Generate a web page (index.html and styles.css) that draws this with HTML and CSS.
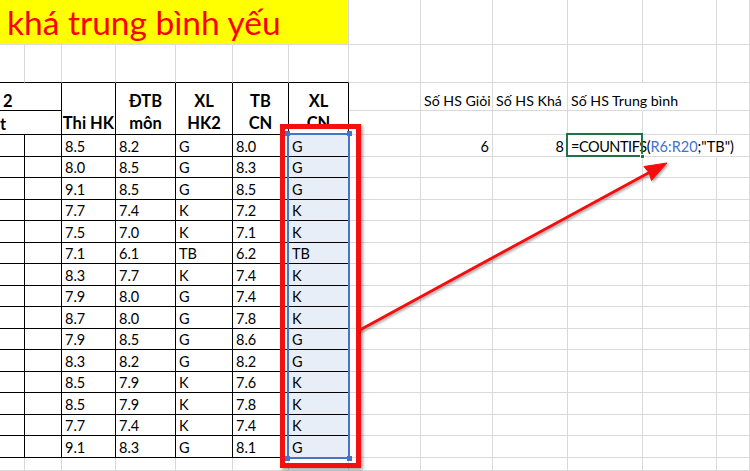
FILE: index.html
```html
<!DOCTYPE html>
<html lang="vi">
<head>
<meta charset="utf-8">
<title>COUNTIFS</title>
<link rel="stylesheet" href="styles.css">
</head>
<body>
<div class="sheet">
  <!-- row 1 -->
  <div class="c title span7">khá trung bình yếu</div>
  <div class="c"></div><div class="c"></div><div class="c"></div><div class="c"></div><div class="c"></div><div class="c"></div>
  <!-- row 2 -->
  <div class="c top"></div><div class="c top"></div><div class="c top"></div><div class="c top"></div><div class="c top"></div><div class="c top"></div><div class="c top"></div>
  <div class="c"></div><div class="c"></div><div class="c"></div><div class="c"></div><div class="c"></div><div class="c"></div>
  <!-- row 3 -->
  <div class="c tb span2 hd2 two">2</div>
  <div class="c tb hdr rs2">Thi HK</div>
  <div class="c tb hdr rs2">ĐTB<br>môn</div>
  <div class="c tb hdr rs2">XL<br>HK2</div>
  <div class="c tb hdr rs2">TB<br>CN</div>
  <div class="c tb hdr rs2">XL<br>CN</div>
  <div class="c"></div>
  <div class="c lbl">Số HS Giỏi</div>
  <div class="c lbl">Số HS Khá</div>
  <div class="c nr lbl">Số HS Trung bình</div>
  <div class="c"></div><div class="c"></div>
  <!-- row 4 -->
  <div class="c tb span2 hd2 tee">t</div>
  <div class="c"></div><div class="c"></div><div class="c"></div><div class="c"></div><div class="c"></div><div class="c"></div>
  <!-- data rows -->
  <div class="c tb"></div><div class="c tb"></div><div class="c tb">8.5</div><div class="c tb">8.2</div><div class="c tb">G</div><div class="c tb">8.0</div><div class="c tb sel">G</div>
  <div class="c"></div><div class="c num">6</div><div class="c num">8</div>
  <div class="c nr formula"><span class="fn">=COUNTIFS</span>(<span class="ref">R6:R20</span>;"TB")</div>
  <div class="c nr"></div><div class="c"></div>

  <div class="c tb"></div><div class="c tb"></div><div class="c tb">8.0</div><div class="c tb">8.5</div><div class="c tb">G</div><div class="c tb">8.3</div><div class="c tb sel">G</div>
  <div class="c"></div><div class="c"></div><div class="c"></div><div class="c"></div><div class="c"></div><div class="c"></div>

  <div class="c tb"></div><div class="c tb"></div><div class="c tb">9.1</div><div class="c tb">8.5</div><div class="c tb">G</div><div class="c tb">8.5</div><div class="c tb sel">G</div>
  <div class="c"></div><div class="c"></div><div class="c"></div><div class="c"></div><div class="c"></div><div class="c"></div>

  <div class="c tb"></div><div class="c tb"></div><div class="c tb">7.7</div><div class="c tb">7.4</div><div class="c tb">K</div><div class="c tb">7.2</div><div class="c tb sel">K</div>
  <div class="c"></div><div class="c"></div><div class="c"></div><div class="c"></div><div class="c"></div><div class="c"></div>

  <div class="c tb"></div><div class="c tb"></div><div class="c tb">7.5</div><div class="c tb">7.0</div><div class="c tb">K</div><div class="c tb">7.1</div><div class="c tb sel">K</div>
  <div class="c"></div><div class="c"></div><div class="c"></div><div class="c"></div><div class="c"></div><div class="c"></div>

  <div class="c tb"></div><div class="c tb"></div><div class="c tb">7.1</div><div class="c tb">6.1</div><div class="c tb">TB</div><div class="c tb">6.2</div><div class="c tb sel">TB</div>
  <div class="c"></div><div class="c"></div><div class="c"></div><div class="c"></div><div class="c"></div><div class="c"></div>

  <div class="c tb"></div><div class="c tb"></div><div class="c tb">8.3</div><div class="c tb">7.7</div><div class="c tb">K</div><div class="c tb">7.4</div><div class="c tb sel">K</div>
  <div class="c"></div><div class="c"></div><div class="c"></div><div class="c"></div><div class="c"></div><div class="c"></div>

  <div class="c tb"></div><div class="c tb"></div><div class="c tb">7.9</div><div class="c tb">8.0</div><div class="c tb">G</div><div class="c tb">7.4</div><div class="c tb sel">K</div>
  <div class="c"></div><div class="c"></div><div class="c"></div><div class="c"></div><div class="c"></div><div class="c"></div>

  <div class="c tb"></div><div class="c tb"></div><div class="c tb">8.7</div><div class="c tb">8.0</div><div class="c tb">G</div><div class="c tb">7.8</div><div class="c tb sel">K</div>
  <div class="c"></div><div class="c"></div><div class="c"></div><div class="c"></div><div class="c"></div><div class="c"></div>

  <div class="c tb"></div><div class="c tb"></div><div class="c tb">7.9</div><div class="c tb">8.5</div><div class="c tb">G</div><div class="c tb">8.6</div><div class="c tb sel">G</div>
  <div class="c"></div><div class="c"></div><div class="c"></div><div class="c"></div><div class="c"></div><div class="c"></div>

  <div class="c tb"></div><div class="c tb"></div><div class="c tb">8.3</div><div class="c tb">8.2</div><div class="c tb">G</div><div class="c tb">8.2</div><div class="c tb sel">G</div>
  <div class="c"></div><div class="c"></div><div class="c"></div><div class="c"></div><div class="c"></div><div class="c"></div>

  <div class="c tb"></div><div class="c tb"></div><div class="c tb">8.5</div><div class="c tb">7.9</div><div class="c tb">K</div><div class="c tb">7.6</div><div class="c tb sel">K</div>
  <div class="c"></div><div class="c"></div><div class="c"></div><div class="c"></div><div class="c"></div><div class="c"></div>

  <div class="c tb"></div><div class="c tb"></div><div class="c tb">8.5</div><div class="c tb">7.9</div><div class="c tb">K</div><div class="c tb">7.8</div><div class="c tb sel">K</div>
  <div class="c"></div><div class="c"></div><div class="c"></div><div class="c"></div><div class="c"></div><div class="c"></div>

  <div class="c tb"></div><div class="c tb"></div><div class="c tb">7.7</div><div class="c tb">7.4</div><div class="c tb">K</div><div class="c tb">7.4</div><div class="c tb sel">K</div>
  <div class="c"></div><div class="c"></div><div class="c"></div><div class="c"></div><div class="c"></div><div class="c"></div>

  <div class="c tb"></div><div class="c tb"></div><div class="c tb">9.1</div><div class="c tb">8.3</div><div class="c tb">G</div><div class="c tb">8.1</div><div class="c tb sel">G</div>
  <div class="c"></div><div class="c"></div><div class="c"></div><div class="c"></div><div class="c"></div><div class="c"></div>
  <!-- row below table -->
  <div class="c"></div><div class="c"></div><div class="c"></div><div class="c"></div><div class="c"></div><div class="c"></div><div class="c"></div>
  <div class="c"></div><div class="c"></div><div class="c"></div><div class="c"></div><div class="c"></div><div class="c"></div>
</div>

<div class="sel-box">
  <i class="handle h-tl"></i><i class="handle h-tr"></i><i class="handle h-bl"></i><i class="handle h-br"></i>
</div>
<div class="red-box"></div>

<svg class="arrow" width="750" height="471" viewBox="0 0 750 471" aria-hidden="true">
  <defs>
    <filter id="sh" x="-10%" y="-10%" width="120%" height="120%">
      <feDropShadow dx="1.5" dy="1.5" stdDeviation="1" flood-color="#000" flood-opacity="0.35"/>
    </filter>
  </defs>
  <g filter="url(#sh)" fill="#f51010" stroke="#f51010">
    <line x1="358" y1="331" x2="652" y2="171" stroke-width="3"/>
    <polygon points="667,163 651.5,180.5 649,172.5 643.9,166.5" stroke-width="1" stroke-linejoin="round"/>
  </g>
</svg>
</body>
</html>
```

FILE: styles.css
```css
html, body {
  margin: 0;
  padding: 0;
}

body {
  width: 750px;
  height: 471px;
  overflow: hidden;
  position: relative;
  background: #ffffff;
  color: #000000;
  font-family: Lato, "Noto Sans", sans-serif;
}

.sheet {
  display: grid;
  width: 750px;
  grid-template-columns: 25px 37px 54px 60px 57px 56px 60px 72px 72px 75px 75px 74px 1fr;
  grid-template-rows: 45px 38px 28px 24px repeat(15, 21.53px) 13px;
  font-size: 14.5px;
  line-height: 18px;
}

.c {
  box-sizing: border-box;
  min-width: 0;
  display: flex;
  align-items: flex-end;
  padding: 0 3px;
  white-space: nowrap;
  border-right: 1px solid #d9d9d9;
  border-bottom: 1px solid #d9d9d9;
}

.tb {
  border-right-color: #000000;
  border-bottom-color: #000000;
}

.top {
  border-bottom-color: #000000;
}

.nr {
  border-right-color: transparent;
}

.span7 { grid-column: span 7; }
.span2 { grid-column: span 2; }
.rs2 { grid-row: span 2; }

.title {
  background: #ffff00;
  color: #ff0000;
  font-size: 33.5px;
  line-height: 40px;
  padding: 0 0 2px 7px;
}

.hdr {
  justify-content: center;
  text-align: center;
  padding: 0;
  font-weight: 700;
  font-size: 16.5px;
  line-height: 22px;
}

.hd2 {
  font-weight: 700;
  font-size: 16.5px;
  line-height: 18px;
}

.two { padding-left: 3px; }
.tee { padding-left: 0; line-height: 20px; }

.lbl {
  font-size: 14.2px;
}

.num {
  justify-content: flex-end;
}

.sel {
  background: #e8eef8;
}

.formula {
  position: relative;
  overflow: visible;
  padding-left: 3px;
  font-size: 14.5px;
}

.fn {
  letter-spacing: -0.45px;
}

.formula::after {
  content: "";
  position: absolute;
  left: -2px;
  top: -2px;
  right: -1px;
  bottom: -1px;
  border: 2px solid #217346;
}

.formula::before {
  content: "";
  position: absolute;
  right: -3px;
  bottom: -3px;
  width: 5px;
  height: 5px;
  background: #217346;
  border: 1px solid #ffffff;
  box-sizing: border-box;
  z-index: 1;
}

.ref {
  color: #3f72d0;
}

.sel-box {
  position: absolute;
  left: 287px;
  top: 133px;
  width: 63px;
  height: 326px;
  box-sizing: border-box;
  border: 2px solid #4574c8;
  z-index: 2;
}

.handle {
  position: absolute;
  width: 5px;
  height: 5px;
  background: #4574c8;
}

.h-tl { left: -4px; top: -4px; }
.h-tr { right: -4px; top: -4px; }
.h-bl { left: -4px; bottom: -4px; }
.h-br { right: -4px; bottom: -4px; }

.red-box {
  position: absolute;
  left: 280px;
  top: 124px;
  width: 81px;
  height: 344px;
  box-sizing: border-box;
  border: 5px solid #f51010;
  box-shadow: 2px 2px 3px rgba(0, 0, 0, 0.35);
  z-index: 3;
}

.arrow {
  position: absolute;
  left: 0;
  top: 0;
  z-index: 4;
  pointer-events: none;
}
```
